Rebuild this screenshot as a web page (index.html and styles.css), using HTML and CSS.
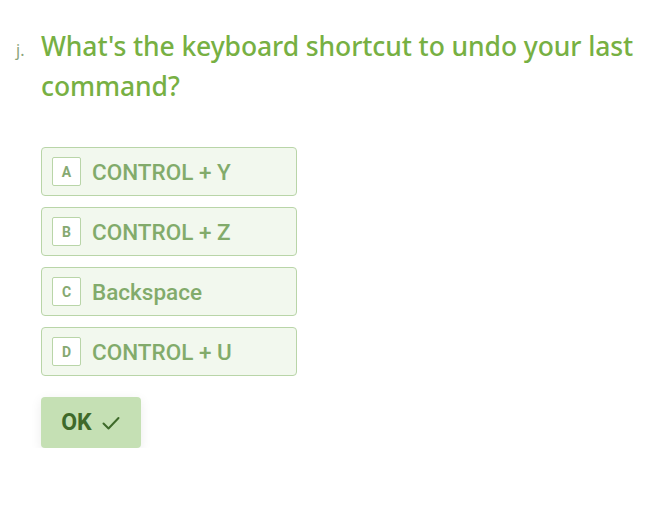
FILE: index.html
```html
<!DOCTYPE html>
<html lang="en">
<head>
<meta charset="utf-8">
<title>Question</title>
<link rel="stylesheet" href="styles.css">
</head>
<body>
<main class="page">
  <div class="question">
    <span class="qnum">j.</span>
    <h1 class="qtext">What's the keyboard shortcut to undo your last command?</h1>
  </div>
  <ul class="options">
    <li class="option"><span class="key">A</span><span class="label">CONTROL + Y</span></li>
    <li class="option"><span class="key">B</span><span class="label">CONTROL + Z</span></li>
    <li class="option"><span class="key">C</span><span class="label">Backspace</span></li>
    <li class="option"><span class="key">D</span><span class="label">CONTROL + U</span></li>
  </ul>
  <button class="ok" type="button">OK
    <svg class="check" width="20" height="20" viewBox="0 0 20 20" aria-hidden="true"><path d="M2.5 10.5l5 5L17.5 5" fill="none" stroke="currentColor" stroke-width="2" stroke-linecap="round" stroke-linejoin="round"/></svg>
  </button>
</main>
</body>
</html>
```
FILE: styles.css
```css
html, body {
  margin: 0;
  padding: 0;
  background: #ffffff;
}
body {
  font-family: "Noto Sans", "DejaVu Sans", sans-serif;
}
.page {
  padding: 26px 20px 0 16px;
}
.question {
  display: flex;
  align-items: baseline;
}
.qnum {
  width: 25px;
  flex: none;
  font-size: 16px;
  color: #8ba47a;
}
.qtext {
  margin: 0;
  font-size: 26.5px;
  line-height: 40px;
  font-weight: 500;
  color: #77b043;
  letter-spacing: -0.1px;
}
.options {
  list-style: none;
  margin: 41px 0 0 25px;
  padding: 0;
  display: flex;
  flex-direction: column;
  gap: 11px;
}
.option {
  box-sizing: border-box;
  width: 256px;
  height: 49px;
  display: flex;
  align-items: center;
  padding: 0 10px;
  background: #f2f8ee;
  border: 1px solid #b9d5a8;
  border-radius: 4px;
}
.key {
  box-sizing: border-box;
  width: 29px;
  height: 29px;
  display: flex;
  align-items: center;
  justify-content: center;
  background: #ffffff;
  border: 1px solid #b9d5a8;
  border-radius: 2px;
  font-family: "Roboto", sans-serif;
  font-size: 14px;
  font-weight: 700;
  color: #86a972;
  margin-right: 11px;
}
.label {
  font-family: "Roboto", sans-serif;
  font-size: 22.5px;
  font-weight: 500;
  color: #82ab6b;
}
.ok {
  margin: 21px 0 0 25px;
  box-sizing: border-box;
  width: 100px;
  height: 51px;
  border: none;
  border-radius: 4px;
  background: #c5e0b4;
  color: #3e6a2a;
  font-family: "Roboto", sans-serif;
  font-size: 23px;
  font-weight: 700;
  display: flex;
  align-items: center;
  justify-content: center;
  gap: 9px;
  box-shadow: 0 3px 12px rgba(0, 0, 0, 0.08);
  padding: 0 0 0 0;
}
.check {
  display: block;
}
```
